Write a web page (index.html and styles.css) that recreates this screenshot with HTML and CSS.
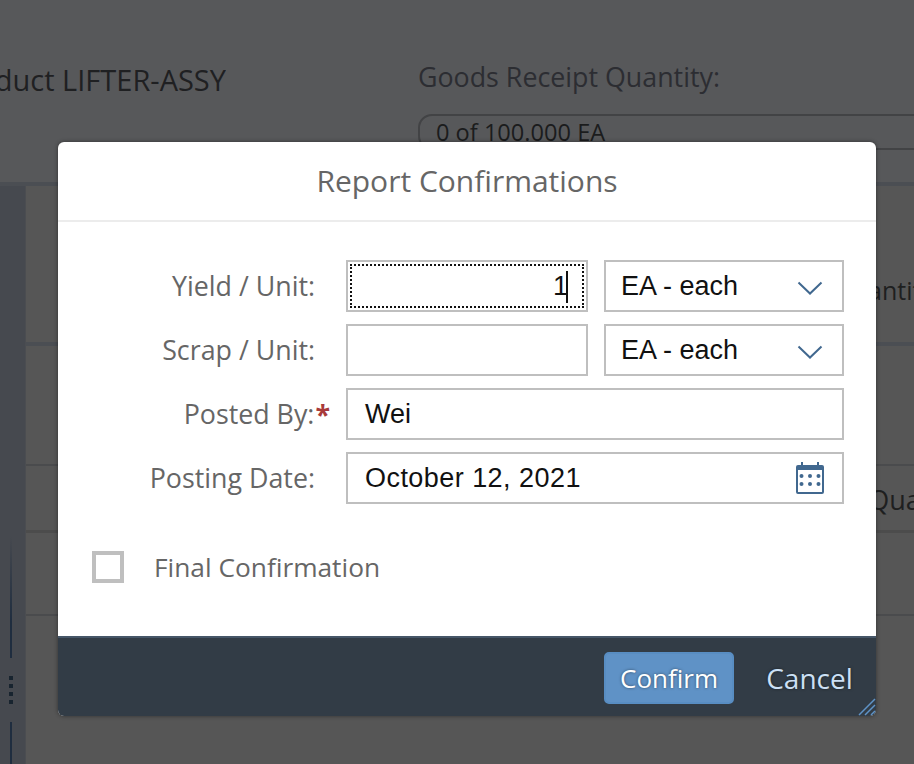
FILE: index.html
```html
<!DOCTYPE html>
<html lang="en">
<head>
<meta charset="utf-8">
<title>Report Confirmations</title>
<link rel="stylesheet" href="styles.css">
</head>
<body>
<div class="page">
  <header class="top">
    <div class="product"><span>Product LIFTER-ASSY</span></div>
    <div class="receipt">
      <div class="receipt-label">Goods Receipt Quantity:</div>
      <div class="receipt-box">0 of 100.000 EA</div>
    </div>
  </header>
  <div class="content">
    <aside class="rail">
      <div class="rail-line"></div>
      <div class="rail-dots"><i></i><i></i><i></i><i></i></div>
      <div class="rail-line short"></div>
    </aside>
    <main class="main">
      <div class="sec sec-a"><span>Quantity</span></div>
      <div class="sec sec-b"></div>
      <div class="sec sec-c"><span>Quantity</span></div>
      <div class="sec sec-d"></div>
      <div class="sec sec-e"></div>
    </main>
  </div>
</div>

<section class="dialog">
  <h1 class="dialog-title">Report Confirmations</h1>
  <div class="dialog-body">
    <div class="form">
      <label class="lbl">Yield / Unit:</label>
      <div class="field num focused"><span class="val">1</span><span class="caret"></span></div>
      <div class="field select unit"><span class="val">EA - each</span>
        <svg class="chev" width="26" height="14" viewBox="0 0 26 14"><path d="M1.5 1.5 L13 12.5 L24.5 1.5" fill="none" stroke="#41688f" stroke-width="2"/></svg>
      </div>

      <label class="lbl">Scrap / Unit:</label>
      <div class="field num"></div>
      <div class="field select unit"><span class="val">EA - each</span>
        <svg class="chev" width="26" height="14" viewBox="0 0 26 14"><path d="M1.5 1.5 L13 12.5 L24.5 1.5" fill="none" stroke="#41688f" stroke-width="2"/></svg>
      </div>

      <label class="lbl req">Posted By:<span class="star">*</span></label>
      <div class="field wide"><span class="val">Wei</span></div>

      <label class="lbl">Posting Date:</label>
      <div class="field wide select"><span class="val date">October 12, 2021</span>
        <svg class="cal" width="28" height="32" viewBox="0 0 28 32">
          <path fill="#41688f" d="M2 3h3V0h2v3h14V0h2v3h3a2 2 0 0 1 2 2v25a2 2 0 0 1-2 2H2a2 2 0 0 1-2-2V5a2 2 0 0 1 2-2z"/>
          <rect x="2" y="8" width="24" height="22" fill="#fff"/>
          <g fill="#41688f">
            <circle cx="5.5" cy="14" r="2"/><circle cx="14" cy="14" r="2"/><circle cx="22.5" cy="14" r="2"/>
            <circle cx="5.5" cy="22" r="2"/><circle cx="14" cy="22" r="2"/><circle cx="22.5" cy="22" r="2"/>
          </g>
        </svg>
      </div>
    </div>
    <div class="final">
      <span class="check"></span>
      <span class="final-text">Final Confirmation</span>
    </div>
  </div>
  <footer class="dialog-foot">
    <button class="btn primary">Confirm</button>
    <button class="btn ghost">Cancel</button>
    <svg class="grip" width="18" height="18" viewBox="0 0 18 18"><path d="M1 17 L17 1 M7 17 L17 7 M13 17 L17 13" stroke="#5f93c7" stroke-width="1.5" fill="none"/></svg>
  </footer>
</section>
</body>
</html>
```

FILE: styles.css
```css
* { box-sizing: border-box; }
html, body { margin: 0; height: 100%; overflow: hidden; }
body {
  width: 914px;
  height: 764px;
  position: relative;
  background: #555;
  font-family: "Open Sans", "Liberation Sans", sans-serif;
}
.page { width: 914px; height: 764px; display: flex; flex-direction: column; overflow: hidden; }

/* dimmed page behind the dialog */
.top {
  height: 186px;
  flex: none;
  background: #57585a;
  border-bottom: 4px solid #4b4e53;
  display: flex;
  color: #1f2021;
}
.product {
  width: 226px;
  flex: none;
  display: flex;
  justify-content: flex-end;
  overflow: hidden;
  white-space: nowrap;
  padding-top: 61px;
  font-size: 29px;
  line-height: 38px;
  color: #1f2022;
}
.receipt { margin-left: 192px; flex: 1; min-width: 0; padding-top: 58px; }
.receipt-label { font-size: 26.8px; line-height: 38px; color: #2c2d32; white-space: nowrap; }
.receipt-box {
  margin-top: 18px;
  height: 36px;
  margin-right: -40px;
  border: 2px solid #424345;
  border-radius: 14px;
  padding-left: 16px;
  font-size: 23.6px;
  line-height: 32px;
  color: #1b1c1d;
}
.content { flex: 1; display: flex; min-height: 0; }
.rail {
  width: 26px;
  flex: none;
  background: #46494f;
  border-right: 1px solid #4b4d51;
  display: flex;
  flex-direction: column;
  align-items: center;
  padding-top: 350px;
}
.rail-line { width: 2px; height: 122px; background: linear-gradient(#46494f, #1f2d3f 70%); flex: none; margin-right: 4px; }
.rail-line.short { height: 60px; background: #1f2d3f; }
.rail-dots { display: flex; flex-direction: column; gap: 4px; margin: 18px 4px 18px 0; flex: none; }
.rail-dots i { display: block; width: 4px; height: 4px; background: #18242f; }
.main { flex: 1; min-width: 0; display: flex; flex-direction: column; background: #565656; color: #1e1f20; }
.sec { flex: none; font-size: 25px; white-space: nowrap; text-align: right; overflow: hidden; }
.sec span { display: inline-block; margin-right: -20px; }
.sec-a { height: 160px; border-bottom: 4px solid #4b4e53; padding-top: 86px; line-height: 36px; }
.sec-b { height: 120px; border-bottom: 2px solid #4a4b4d; }
.sec-c { height: 67px; border-bottom: 3px solid #4c4c4c; padding-top: 16px; line-height: 36px; }
.sec-c span { font-size: 27px; margin-right: -63px; }
.sec-d { height: 83px; border-bottom: 2px solid #4a4b4d; }
.sec-e { flex: 1; }

/* dialog */
.dialog {
  position: absolute;
  left: 58px;
  top: 142px;
  width: 818px;
  height: 574px;
  background: #fff;
  border-radius: 6px;
  overflow: hidden;
  display: flex;
  flex-direction: column;
  box-shadow: 0 0 4px rgba(0, 0, 0, .45);
}
.dialog-title {
  margin: 0;
  height: 80px;
  flex: none;
  border-bottom: 2px solid #ececec;
  text-align: center;
  font-weight: 400;
  font-size: 30px;
  line-height: 78px;
  color: #666;
}
.dialog-body { flex: 1; min-height: 0; }
.form {
  padding-top: 38px;
  display: grid;
  grid-template-columns: 272px 242px 240px;
  column-gap: 16px;
  row-gap: 12px;
  grid-auto-rows: 52px;
}
.lbl {
  display: flex;
  justify-content: flex-end;
  align-items: center;
  padding-right: 15px;
  padding-bottom: 1px;
  font-size: 26.8px;
  color: #666;
  white-space: nowrap;
}
.lbl.req { padding-right: 0; }
.star { color: #a83a3a; font-weight: 700; margin-left: 1px; }
.field {
  position: relative;
  border: 2px solid #bfbfbf;
  display: flex;
  align-items: center;
  padding: 1px 16px 0 17px;
  font-family: "Liberation Sans", Arial, sans-serif;
  font-size: 27px;
  color: #111;
  background: #fff;
}
.unit { padding-left: 15px; }
.val { white-space: nowrap; }
.date { letter-spacing: .45px; }
.wide { grid-column: span 2; }
.select { justify-content: space-between; }
.num { justify-content: flex-end; padding-right: 18px; }
.focused::after {
  content: "";
  position: absolute;
  inset: 2px;
  border: 2px dotted #111;
  pointer-events: none;
}
.caret { width: 2px; height: 32px; background: #111; margin-left: -2px; }
.chev { margin-right: 3px; margin-top: 2px; }
.cal { margin-right: 2px; margin-top: -1px; }
.final {
  margin: 45px 0 0 34px;
  display: flex;
  align-items: center;
  gap: 30px;
}
.check { width: 32px; height: 32px; border: 4px solid #bfbfbf; background: #fff; flex: none; }
.final-text { font-size: 26.3px; color: #666; }

.dialog-foot {
  position: relative;
  height: 80px;
  flex: none;
  background: #323c46;
  border-top: 2px solid #465668;
  display: flex;
  justify-content: flex-end;
  align-items: flex-start;
  padding: 14px 7px 0 0;
  gap: 16px;
}
.btn {
  font-family: inherit;
  height: 52px;
  padding: 0;
  cursor: pointer;
  text-shadow: 0 0 3px rgba(0, 0, 0, .5);
}
.primary { width: 130px; font-size: 26px; background: #5f92c6; border: 2px solid #588dc2; border-radius: 5px; color: #fff; }
.ghost { width: 119px; font-size: 28px; background: none; border: 0; color: #cce0f5; }
.grip { position: absolute; right: 0; bottom: 0; }
```
